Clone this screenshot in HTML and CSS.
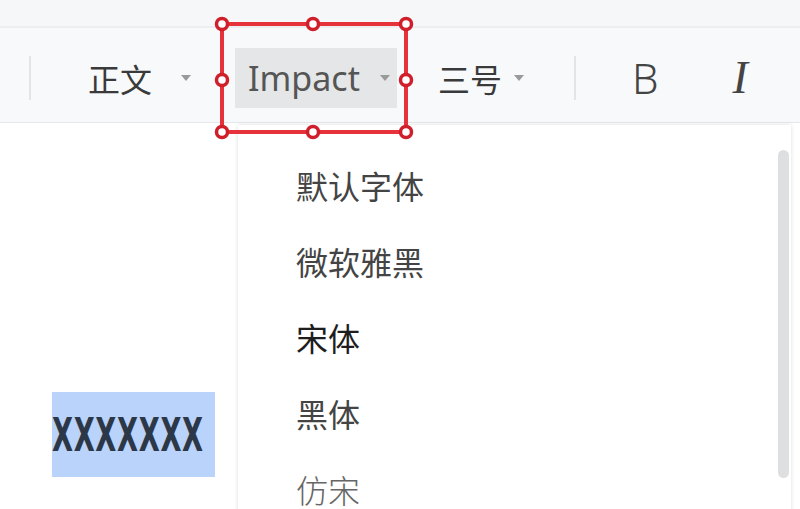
FILE: index.html
```html
<!DOCTYPE html>
<html lang="zh">
<head>
<meta charset="utf-8">
<link rel="stylesheet" href="styles.css">
</head>
<body>
<div class="app">
  <div class="topbar"></div>
  <div class="toolbar">
    <span class="divider first"></span>
    <div class="select style-select">
      <span class="label">正文</span>
      <span class="caret"></span>
    </div>
    <div class="select font-select">
      <span class="label latin">Impact</span>
      <span class="caret"></span>
    </div>
    <div class="select size-select">
      <span class="label">三号</span>
      <span class="caret"></span>
    </div>
    <span class="divider second"></span>
    <span class="btn bold-btn">B</span>
    <span class="btn italic-btn">I</span>
  </div>
  <div class="editor">
    <div class="para">
      <span class="selected"><span class="impact-text">XXXXXXX</span></span>
    </div>
  </div>

  <div class="dropdown">
    <ul class="menu">
      <li class="item">默认字体</li>
      <li class="item">微软雅黑</li>
      <li class="item song">宋体</li>
      <li class="item">黑体</li>
      <li class="item fang">仿宋</li>
    </ul>
    <div class="scrollbar"></div>
  </div>

  <svg class="selection-box" width="210" height="136" viewBox="0 0 210 136">
    <rect x="12" y="12" width="184" height="108" fill="none" stroke="#e5323b" stroke-width="4"/>
    <g fill="#fff" stroke="#cf1f2b" stroke-width="3.5">
      <circle cx="12" cy="12" r="5.5"/>
      <circle cx="103" cy="12" r="5.5"/>
      <circle cx="196" cy="12" r="5.5"/>
      <circle cx="12" cy="68" r="5.5"/>
      <circle cx="196" cy="68" r="5.5"/>
      <circle cx="12" cy="120" r="5.5"/>
      <circle cx="103" cy="120" r="5.5"/>
      <circle cx="196" cy="120" r="5.5"/>
    </g>
  </svg>
</div>
</body>
</html>
```
FILE: styles.css
```css
* { box-sizing: border-box; margin: 0; padding: 0; }
html, body { width: 800px; height: 509px; overflow: hidden; background: #fff; }
body { font-family: "Noto Sans", "Noto Sans CJK SC", sans-serif; color: #333; }

.app { position: relative; width: 800px; height: 509px; overflow: hidden; }

.topbar {
  height: 28px;
  background: #f6f7f9;
  border-bottom: 2px solid #eceef1;
}

.toolbar {
  height: 95px;
  padding-top: 5px;
  background: #f8f9fb;
  border-bottom: 1px solid #e6e7ea;
  display: flex;
  align-items: center;
}

.divider { width: 2px; height: 44px; background: #e3e4e7; }
.divider.first { margin-left: 29px; }
.divider.second { margin-left: 50px; }

.select { display: flex; align-items: center; height: 60px; }
.label { font-family: "Noto Sans CJK SC", "Noto Sans", sans-serif; font-size: 32px; color: #3a3a3a; line-height: 1; }
.latin { font-family: "Noto Sans", "Noto Sans CJK SC", sans-serif; font-size: 34px; color: #555; }

.caret {
  width: 0; height: 0;
  border-left: 5px solid transparent;
  border-right: 5px solid transparent;
  border-top: 6px solid #9a9a9a;
}

.style-select { margin-left: 57px; }
.style-select .caret { margin-left: 29px; }

.font-select {
  margin-left: 44px;
  width: 162px;
  padding-left: 13px;
  background: #e5e6e8;
}
.font-select .caret { margin-left: 20px; }

.size-select { margin-left: 41px; }
.size-select .caret { margin-left: 12px; }

.btn { color: #444; line-height: 1; }
.bold-btn { margin-left: 56px; font-family: "Noto Sans", sans-serif; font-size: 42px; font-weight: 300; }
.italic-btn { margin-left: 74px; font-family: "Liberation Serif", serif; font-style: italic; font-size: 46px; }

.editor { padding: 269px 0 0 52px; }
.selected {
  display: inline-block;
  width: 163px;
  height: 85px;
  background: #b9d3fa;
  overflow: hidden;
}
.impact-text {
  display: inline-block;
  font-family: "DejaVu Sans Condensed", "DejaVu Sans", sans-serif;
  font-weight: 700;
  font-size: 47px;
  line-height: 85px;
  color: #2c3848;
  letter-spacing: 1px;
  transform: scaleX(0.645);
  transform-origin: 0 50%;
}

.dropdown {
  position: absolute;
  left: 238px;
  top: 125px;
  width: 553px;
  height: 400px;
  background: #fff;
  box-shadow: 0 0 4px rgba(0, 0, 0, 0.14);
}
.menu { list-style: none; padding-top: 22px; }
.item {
  height: 76px;
  display: flex;
  align-items: center;
  padding-left: 58px;
  font-family: "Noto Sans CJK SC", sans-serif;
  font-size: 32px;
  color: #444;
}
.item.song { color: #1e1e1e; }
.item.fang { color: #666; font-weight: 300; }

.scrollbar {
  position: absolute;
  right: 2px;
  top: 25px;
  width: 11px;
  height: 328px;
  border-radius: 6px;
  background: #dedfe1;
}

.selection-box { position: absolute; left: 210px; top: 12px; }
```
